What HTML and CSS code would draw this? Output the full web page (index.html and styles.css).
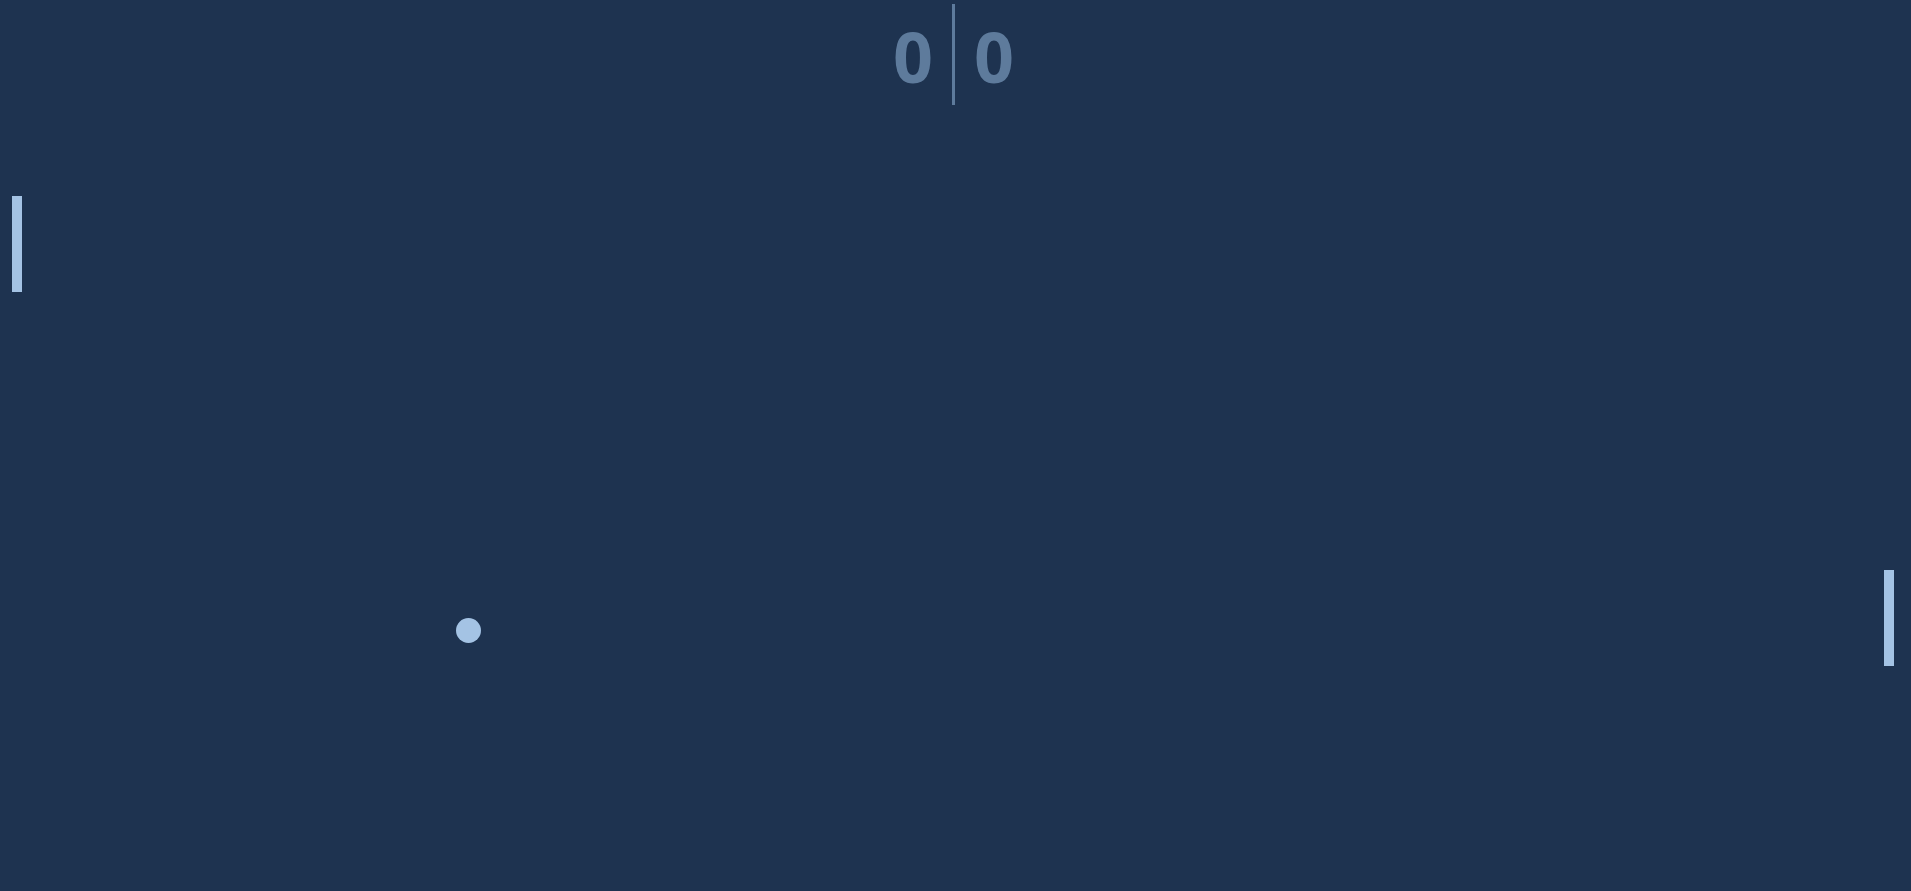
FILE: index.html
```html
<!DOCTYPE html>
<html>
<head>
<meta charset="utf-8">
<link rel="stylesheet" href="styles.css">
</head>
<body>
<div class="game">
  <div class="scoreboard">
    <span class="score">0</span>
    <span class="divider"></span>
    <span class="score">0</span>
  </div>
  <div class="paddle paddle-left"></div>
  <div class="paddle paddle-right"></div>
  <div class="ball"></div>
</div>
</body>
</html>
```
FILE: styles.css
```css
html, body {
  margin: 0;
  padding: 0;
  width: 100%;
  height: 100%;
  background: #1e3350;
  overflow: hidden;
}
.game {
  position: relative;
  width: 100%;
  height: 100%;
}
.scoreboard {
  display: flex;
  justify-content: center;
  align-items: flex-start;
  gap: 19px;
  padding-top: 4px;
  padding-right: 4px;
  font-family: "Open Sans", sans-serif;
  font-weight: 700;
}
.score {
  font-size: 70px;
  line-height: 1;
  margin-top: 17px;
  color: #5e7b9c;
}
.divider {
  width: 3px;
  height: 101px;
  background: #5e7b9c;
}
.paddle {
  position: absolute;
  width: 10px;
  height: 96px;
  background: #a4c3e4;
}
.paddle-left {
  left: 12px;
  top: 196px;
}
.paddle-right {
  left: 1884px;
  top: 570px;
}
.ball {
  position: absolute;
  left: 456px;
  top: 618px;
  width: 25px;
  height: 25px;
  border-radius: 50%;
  background: #a4c3e4;
}
```
